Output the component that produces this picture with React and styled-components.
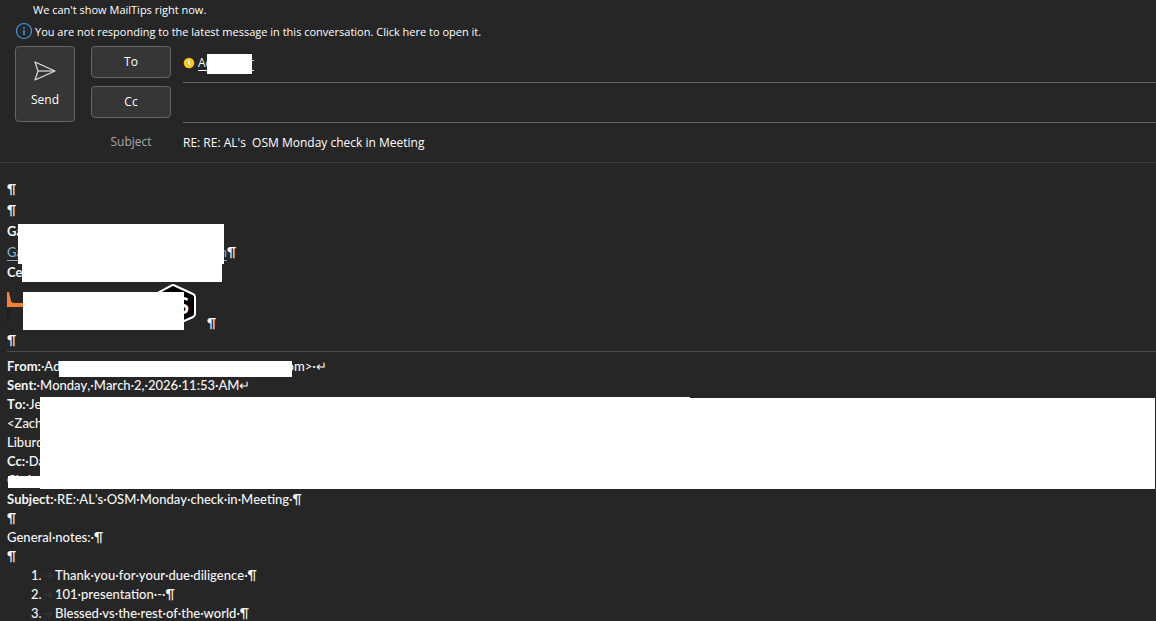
import styled, { createGlobalStyle } from 'styled-components';

const GlobalStyle = createGlobalStyle`
  * {
    box-sizing: border-box;
  }
  body {
    margin: 0;
    background-color: #262626;
    color: #f5f5f5;
  }
`;

const Window = styled.div`
  display: flex;
  flex-direction: column;
  min-height: 100vh;
  font-family: "Open Sans", "Noto Sans", sans-serif;
  font-size: 12px;
`;

// Bandeau d'informations
const Tips = styled.div`
  display: flex;
  flex-direction: column;
  padding: 0px 15px;
  font-size: 11px;
  color: #fff;
`;

const Tip = styled.p`
  display: flex;
  align-items: center;
  height: ${(props) => (props.$first ? '18px' : '26px')};
  margin: 0;
  padding-left: ${(props) => (props.$first ? '18px' : '0px')};
`;

const TipLink = styled.a`
  display: flex;
  align-items: center;
  gap: 2px;
  color: inherit;
  text-decoration: none;
`;

// En-tête du message
const Header = styled.form`
  display: grid;
  grid-template-columns: 60px 80px 1fr;
  grid-template-rows: 40px 40px 36px;
  column-gap: 16px;
  padding: 2px 0px 0px 15px;
  border-bottom: 1px solid #3b3b3b;
`;

const Button = styled.button`
  height: 32px;
  padding: 0px 0px 2px;
  background-color: #363636;
  border: 1px solid #666;
  border-radius: 4px;
  color: #fff;
  font: inherit;
`;

const SendButton = styled(Button)`
  display: flex;
  flex-direction: column;
  align-items: center;
  justify-content: center;
  gap: 10px;
  grid-row: span 2;
  height: 76px;
  padding: 0;
`;

const Field = styled.div`
  position: relative;
  display: flex;
  align-items: center;
  gap: 3px;
  height: 37px;
  margin-left: -4px;
  padding-bottom: 2px;
  border-bottom: 1px solid #666;
`;

const Recipient = styled.a`
  display: flex;
  width: 56px;
  justify-content: space-between;
  color: #f5f5f5;
  border-bottom: 1px solid #f5f5f5;
  line-height: 14px;
  text-decoration: none;
`;

const RecipientInput = styled.input`
  flex: 1;
  min-width: 0;
  padding: 0;
  background: none;
  border: none;
  outline: none;
  color: #fff;
  font: inherit;
`;

const SubjectLabel = styled.label`
  grid-column: 2;
  line-height: 32px;
  color: #a6a6a6;
  text-align: center;
`;

const SubjectInput = styled(RecipientInput)`
  height: 32px;
  margin-left: -4px;
`;

// Corps du message
const Message = styled.main`
  position: relative;
  flex: 1;
  padding: 16px 0px 0px 7px;
  font-family: Lato, sans-serif;
  font-size: 13px;
  font-weight: 500;
  font-kerning: none;
`;

const Line = styled.p`
  height: ${(props) => (props.$tall ? '21px' : '19px')};
  margin: 0;
  line-height: ${(props) => (props.$tall ? '21px' : '19px')};
  white-space: pre;
`;

const MailLink = styled.a`
  display: inline-flex;
  justify-content: space-between;
  width: 220px;
  height: 18px;
  line-height: 18px;
  color: #7fb0bf;
  border-bottom: 1px solid #7fb0bf;
  text-decoration: none;
`;

const Logos = styled.div`
  display: flex;
  align-items: flex-end;
  height: 49px;
`;

const BadgeLogo = styled.svg`
  margin: 0px 8px 4px 126px;
`;

const Divider = styled.hr`
  margin: 1px 0px 5px;
  border: none;
  border-top: 1px solid #4a4a4a;
`;

const Gap = styled.span`
  display: inline-block;
  width: ${(props) => props.$width}px;
`;

const Notes = styled.ol`
  margin: 0;
  padding: 0;
  list-style: none;
`;

const Note = styled.li`
  display: grid;
  grid-template-columns: 12px 12px 1fr;
  align-items: center;
  padding-left: 24px;
  line-height: 19px;
`;

const Redaction = styled.div`
  position: absolute;
  top: ${(props) => props.$top}px;
  left: ${(props) => props.$left}px;
  right: ${(props) => (props.$width ? 'auto' : '1px')};
  width: ${(props) => (props.$width ? `${props.$width}px` : 'auto')};
  height: ${(props) => props.$height}px;
  background-color: #fff;
`;

const redactions = [
  { top: 61, left: 18, width: 206, height: 40 },
  { top: 101, left: 22, width: 200, height: 18 },
  { top: 129, left: 23, width: 161, height: 38 },
  { top: 198, left: 59, width: 233, height: 16 },
  { top: 234, left: 40, width: 650, height: 1 },
  { top: 235, left: 40, height: 91 },
  { top: 313, left: 8, width: 32, height: 12 },
];

const notes = [
  'Thank·you·for·your·due·diligence·¶',
  '101·presentation·-·¶',
  'Blessed·vs·the·rest·of·the·world·¶',
];

export default function App() {
  return (
    <Window>
      <GlobalStyle />
      <Tips>
        <Tip $first>We can't show MailTips right now.</Tip>
        <Tip>
          <TipLink href="#latest">
            <svg width="18" height="18" viewBox="0 0 18 18" fill="none">
              <circle cx="9" cy="9" r="7.5" stroke="#3a96dd" strokeWidth="1.2" />
              <path d="M9 8v5M9 5v1.7" stroke="#3a96dd" strokeWidth="1.6" />
            </svg>
            You are not responding to the latest message in this conversation. Click here to open it.
          </TipLink>
        </Tip>
      </Tips>

      <Header onSubmit={(e) => e.preventDefault()}>
        <SendButton type="submit">
          <svg width="24" height="20" viewBox="0 0 24 20" fill="none" stroke="#e0e0e0" strokeWidth="1.2">
            <path d="M2 1l20 9L2 19l3-9z" strokeLinejoin="round" />
            <path d="M5 10h16" />
          </svg>
          Send
        </SendButton>
        <Button type="button">To</Button>
        <Field>
          <svg width="12" height="12" viewBox="0 0 12 12">
            <circle cx="6" cy="6" r="5.3" fill="#fdc516" />
            <path d="M5.8 2.8v3.4l2 1.8" stroke="#fff" strokeWidth="1.5" fill="none" />
          </svg>
          <Recipient href="#recipient">
            <span>Ad</span>
            <span>r</span>
          </Recipient>
          <RecipientInput aria-label="To" />
          <Redaction $top={8} $left={24} $width={45} $height={20} />
        </Field>
        <Button type="button">Cc</Button>
        <Field>
          <RecipientInput aria-label="Cc" />
        </Field>
        <SubjectLabel htmlFor="subject">Subject</SubjectLabel>
        <SubjectInput id="subject" defaultValue="RE: RE: AL's  OSM Monday check in Meeting" />
      </Header>

      <Message>
        <Line $tall>¶</Line>
        <Line $tall>¶</Line>
        <Line $tall><b>Ga</b></Line>
        <Line $tall>
          <MailLink href="#mail"><span>Ga</span><span>m</span></MailLink>¶
        </Line>
        <Line><b>Cer</b></Line>
        <Logos>
          <svg width="24" height="40" viewBox="0 0 24 40">
            <path d="M0 1h2l2 9q.6 2 3 2H24v4H0z" fill="#f58233" />
            <path d="M0 18h5q-2 1-2.500 6L0 34z" fill="#1f1c1c" />
          </svg>
          <BadgeLogo width="42" height="44" viewBox="0 0 42 44">
            <path
              d="M14.500 2.500q1.500-1 3 0L36 11q2 1 2 3v17q0 2-2 3L18 42-3 33V12z"
              fill="#000"
              stroke="#fff"
              strokeWidth="2"
              strokeLinejoin="round"
            />
            <text x="20" y="31" fill="#fff" fontSize="22" fontWeight="700">S</text>
          </BadgeLogo>
          <span>¶</span>
        </Logos>
        <Line>¶</Line>
        <Divider />
        <Line><b>From:</b>·Ad<Gap $width={226} />om&gt;·↵</Line>
        <Line><b>Sent:</b>·Monday,·March·2,·2026·11:53·AM↵</Line>
        <Line><b>To:</b>·Jen</Line>
        <Line>&lt;Zach</Line>
        <Line>Liburd</Line>
        <Line><b>Cc:</b>·Da</Line>
        <Line>Chris</Line>
        <Line><b>Subject:</b>·RE:·AL's·OSM·Monday·check·in·Meeting·¶</Line>
        <Line>¶</Line>
        <Line>General·notes:·¶</Line>
        <Line>¶</Line>
        <Notes>
          {notes.map((note, index) => (
            <Note key={note}>
              <span>{index + 1}.</span>
              <svg width="10" height="8" viewBox="0 0 10 8" fill="none" stroke="#3a3a3a">
                <path d="M1 4h8M6 1l3 3-3 3" />
              </svg>
              <span>{note}</span>
            </Note>
          ))}
        </Notes>
        {redactions.map((box) => (
          <Redaction
            key={box.top}
            $top={box.top}
            $left={box.left}
            $width={box.width}
            $height={box.height}
          />
        ))}
      </Message>
    </Window>
  );
}
